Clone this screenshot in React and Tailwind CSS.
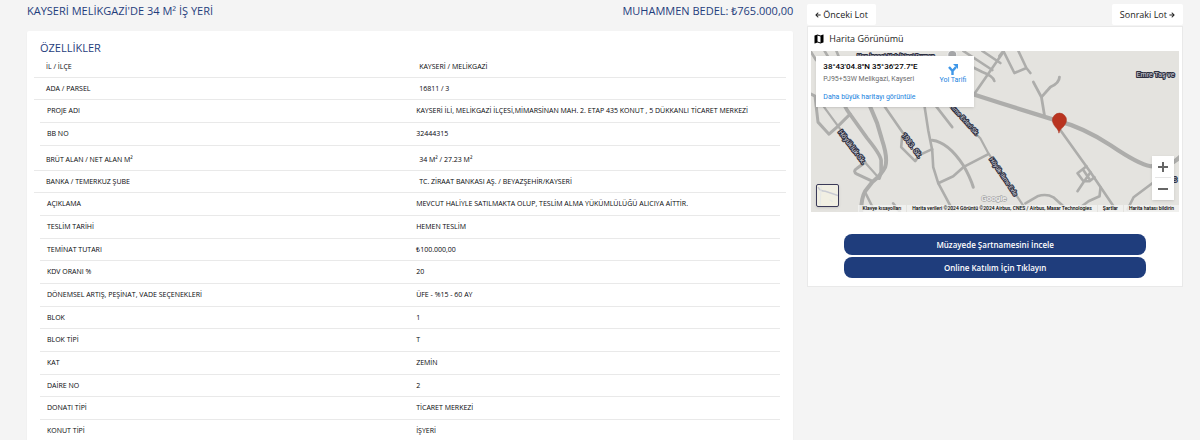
import { useState } from "react";
import { FaArrowLeft, FaArrowRight } from "react-icons/fa";
import { MdMap } from "react-icons/md";

const groups = [
  {
    wide: true,
    rows: [
      ["İL / İLÇE", "KAYSERİ / MELİKGAZİ"],
      ["ADA / PARSEL", "16811 / 3"],
    ],
  },
  {
    wide: false,
    rows: [
      ["PROJE ADI", "KAYSERİ İLİ, MELİKGAZİ İLÇESİ,MİMARSİNAN MAH. 2. ETAP 435 KONUT , 5 DÜKKANLI TİCARET MERKEZİ"],
      ["BB NO", "32444315"],
    ],
  },
  {
    wide: true,
    rows: [
      ["BRÜT ALAN / NET ALAN M²", "34 M² / 27.23 M²"],
      ["BANKA / TEMERKUZ ŞUBE", "TC. ZİRAAT BANKASI AŞ. / BEYAZŞEHİR/KAYSERİ"],
    ],
  },
  {
    wide: false,
    rows: [
      ["AÇIKLAMA", "MEVCUT HALİYLE SATILMAKTA OLUP, TESLİM ALMA YÜKÜMLÜLÜĞÜ ALICIYA AİTTİR."],
      ["TESLİM TARİHİ", "HEMEN TESLİM"],
      ["TEMİNAT TUTARI", "₺100.000,00"],
      ["KDV ORANI %", "20"],
      ["DÖNEMSEL ARTIŞ, PEŞİNAT, VADE SEÇENEKLERİ", "ÜFE - %15 - 60 AY"],
      ["BLOK", "1"],
      ["BLOK TİPİ", "T"],
      ["KAT", "ZEMİN"],
      ["DAİRE NO", "2"],
      ["DONATI TİPİ", "TİCARET MERKEZİ"],
      ["KONUT TİPİ", "İŞYERİ"],
    ],
  },
];

function FeatureTable({ wide, rows }) {
  return (
    <div className={wide ? "px-[7px] nth-[n+3]:pt-[3px]" : "px-[13px]"}>
      <table className="w-full table-fixed border-separate border-spacing-0 text-left text-[7px] leading-[10px] text-[#05060a]">
        <tbody>
          {rows.map(([name, value]) => (
            <tr key={name} className={wide ? "h-[22px]" : "h-[23px] nth-[3n]:h-[22px]"}>
              <th
                scope="row"
                className={`w-1/2 border-b border-[#e9e9e9] p-0 font-medium ${wide ? "pl-3" : "pl-[7px]"}`}
              >
                {name}
              </th>
              <td className={`border-b border-[#e9e9e9] p-0 font-medium ${wide ? "pl-[9px]" : "pl-[6px]"}`}>
                {value}
              </td>
            </tr>
          ))}
        </tbody>
      </table>
    </div>
  );
}

function MapDrawing({ zoom }) {
  return (
    <svg
      viewBox="811 51 367 161"
      preserveAspectRatio="xMidYMid slice"
      className="block h-auto w-full bg-[#e4e3df]"
      role="img"
      aria-label="Harita"
    >
      <g transform={`translate(1058 130) scale(${zoom}) translate(-1058 -130)`}>
        <g fill="none" stroke="#adadab" strokeWidth="2.6" strokeLinecap="round" strokeLinejoin="round">
          <path d="M811 94L815 96L818 122L829 134L838 126L850 114" strokeWidth="3" />
          <path d="M811 52L816 60M824 50L830 60M836 50L840 60" />
          <path d="M819 100L838 126L863 160L879 178" strokeWidth="2.2" />
          <path d="M840 97L847 110L867 138Q880 154 881 160L881 172L879 178" strokeWidth="3.6" />
          <path d="M866 97L877 123L882 140Q888 158 885 167Q881 175 872 182L865 191Q861 198 861 212" strokeWidth="4" />
          <path d="M872 181L857 174Q852 171 857 168L865 162" strokeWidth="3" />
          <path d="M865 192L874 210M893 203L900 212" />
          <path d="M880 100L903 133M902 136L901 147L915 161L919 155L932 149" />
          <path d="M924 104L928 130L932 150L933 167L938 183L952 209" />
          <path d="M932 140Q948 142 963 165Q970 177 973 187" strokeWidth="3" />
          <path d="M938 183L953 176L963 167L988 154" />
          <path d="M935 105L952 127" />
          <path d="M950 107L980 138L988 153L1024 207" strokeWidth="2.2" />
          <path d="M1003 52L974 94M963 51L992 70M982 51L1000 63M972 67L982 72Q993 76 994 81" />
          <path d="M999 56L1003 51L1014 73L1026 68L1018 51M1026 68L1030 73" />
          <path d="M1033 82L1041 97L1044 115M1041 97L1050 87Q1059 83 1059 77" strokeWidth="2.8" />
          <path d="M972 94L1000 103L1058 121Q1082 127 1110 145Q1138 164 1150 166Q1168 168 1179 157" strokeWidth="4.2" />
          <path d="M1060 130L1090 172L1115 209" />
          <path d="M1086 166L1077 173L1083 181L1089 181L1094 177M1083 170L1089 179M1090 172L1083 182L1077 191" />
          <path d="M1100 187L1099 196L1088 201L1080 207M1025 203L1037 196Q1046 193 1053 197L1064 207" />
          <path d="M1127 209L1133 197L1153 182" />
        </g>
        <circle cx="952" cy="55" r="4.5" fill="#a5a6a8" stroke="#f2f2f2" />
        <g
          fill="#b9bac1"
          stroke="#2d2f3f"
          strokeWidth="2"
          strokeLinejoin="round"
          fontSize="7"
          fontWeight="500"
          className="font-['Roboto',sans-serif]"
          style={{ paintOrder: "stroke" }}
        >
          <text x="857" y="58" fontSize="6">Han İnşaat Halı İkinci Duman</text>
          <text x="1136" y="77">Emre Taş ve</text>
          <text transform="translate(838 132) rotate(53)">Höyüklük Sk.</text>
          <text transform="translate(901 135) rotate(53)">1983. Sk.</text>
          <text transform="translate(951 108) rotate(48)" fontSize="6">lıme Evleri Sk.</text>
          <text transform="translate(989 159) rotate(56)" fontSize="6">Höyük-Ilıme Evle</text>
          <text transform="translate(1172 182)">S</text>
        </g>
      </g>
      <path
        d="M1058.500 133C1058 128 1052 126 1052 120A7 7 0 0 1 1066 120C1066 126 1059.500 128 1058.500 133Z"
        fill="#b93420"
        stroke="#a52c18"
        strokeWidth="0.5"
      />
      <text
        x="981"
        y="201"
        fontSize="8"
        fill="#fff"
        stroke="#a9a9a9"
        strokeWidth="1.4"
        className="font-['Roboto',sans-serif]"
        style={{ paintOrder: "stroke" }}
      >
        Google
      </text>
    </svg>
  );
}

function MapView() {
  const [zoom, setZoom] = useState(1);

  return (
    <div className="relative overflow-hidden font-['Roboto',sans-serif]">
      <MapDrawing zoom={zoom} />

      {/* place card */}
      <div className="absolute top-[5px] left-[5px] flex h-[51px] w-[158px] justify-between bg-white px-[7px] py-[5px] shadow">
        <div className="whitespace-nowrap">
          <p className="text-[8px] leading-[12px] font-medium text-black">38°43'04.8"N 35°36'27.7"E</p>
          <p className="text-[7px] leading-[12px] text-[#6b6b6b]">PJ95+53W Melikgazi, Kayseri</p>
          <a href="#harita" className="mt-[7px] block text-[7px] leading-[10px] text-[#1a83e0]">
            Daha büyük haritayı görüntüle
          </a>
        </div>
        <a href="#yol-tarifi" className="flex flex-col items-center pt-[2px] pr-px text-[7px] leading-[10px] text-[#1a83e0]">
          <svg viewBox="0 0 12 12" className="size-[12px]" fill="none" stroke="#3f97e8" strokeWidth="2.4">
            <path d="M5.500 12V8L9 4M5.500 8L2 4" />
            <path d="M6 1H11V6Z" fill="#3f97e8" stroke="none" />
          </svg>
          <span>Yol Tarifi</span>
        </a>
      </div>

      {/* map type switch */}
      <button
        type="button"
        aria-label="Harita türü"
        className="absolute bottom-[5px] left-[5px] size-[23px] overflow-hidden rounded-xs border border-[#3b3a58] bg-[#f1efe3] shadow"
      >
        <svg viewBox="0 0 20 20" className="size-full" fill="none" stroke="#c9cbd3">
          <path d="M1 2Q3 6 8 6L20 10" strokeWidth="1.5" />
          <path d="M4 0L3 20M12 14L15 16" stroke="#e6e8e6" />
        </svg>
      </button>

      <div className="absolute right-[5px] bottom-[12px] flex w-[22px] flex-col bg-white px-[3px] shadow">
        <button
          type="button"
          aria-label="Yakınlaştır"
          onClick={() => setZoom(Math.min(zoom * 1.25, 4))}
          className="flex h-[22px] items-center justify-center border-b border-[#e6e6e6]"
        >
          <svg viewBox="0 0 10 10" className="size-[10px]" stroke="#666" strokeWidth="2">
            <path d="M0 5H10M5 0V10" />
          </svg>
        </button>
        <button
          type="button"
          aria-label="Uzaklaştır"
          onClick={() => setZoom(Math.max(zoom / 1.25, 1))}
          className="flex h-[22px] items-center justify-center"
        >
          <svg viewBox="0 0 10 10" className="size-[10px]" stroke="#666" strokeWidth="2">
            <path d="M0 5H10" />
          </svg>
        </button>
      </div>

      <div className="absolute right-0 bottom-0 flex gap-px text-[5px] leading-[7px] font-medium whitespace-nowrap text-black">
        <button type="button" className="bg-[#f3f3f1]/80 px-[5px]">Klavye kısayolları</button>
        <span className="bg-[#f3f3f1]/80 px-[5px]">
          Harita verileri ©2024 Görüntü ©2024 Airbus, CNES / Airbus, Maxar Technologies
        </span>
        <a href="#sartlar" className="bg-[#f3f3f1]/80 px-[5px]">Şartlar</a>
        <a href="#bildir" className="bg-[#f3f3f1]/80 px-[5px]">Harita hatası bildirin</a>
      </div>
    </div>
  );
}

export default function App() {
  return (
    <div className="grid min-h-screen grid-cols-[204fr_100fr] gap-[14px] bg-[#f4f4f4] pr-[17px] pl-[27px] font-['Open_Sans',sans-serif]">
      <main>
        <div className="flex h-[31px] justify-between pt-[3px] text-[11px] leading-[16px] text-[#1f3d7c]">
          <h1>KAYSERİ MELİKGAZİ'DE 34 M² İŞ YERİ</h1>
          <p>MUHAMMEN BEDEL: ₺765.000,00</p>
        </div>
        <section className="min-h-[calc(100vh-31px)] rounded-t-xs bg-white pt-[9px] shadow-xs">
          <h2 className="px-[13px] text-[11px] leading-[16px] text-[#1f3d7c]">ÖZELLİKLER</h2>
          {groups.map((group, i) => (
            <FeatureTable key={i} wide={group.wide} rows={group.rows} />
          ))}
        </section>
      </main>

      <aside>
        <nav className="flex h-[26px] items-start justify-between pt-1 text-[9px] leading-[12px] text-[#222]">
          <a href="#onceki" className="flex h-[21px] items-center gap-[2px] rounded-xs bg-white px-[8px]">
            <FaArrowLeft className="size-[6px]" />
            Önceki Lot
          </a>
          <a href="#sonraki" className="flex h-[21px] items-center gap-[2px] rounded-xs bg-white px-[8px]">
            Sonraki Lot
            <FaArrowRight className="size-[6px]" />
          </a>
        </nav>
        <section className="border border-[#e9e9e9] bg-white px-[3px] pb-2">
          <h2 className="flex h-6 items-center gap-[4px] px-[2px] text-[9px] leading-[12px] text-[#222]">
            <MdMap className="size-[12px] text-black" />
            Harita Görünümü
          </h2>
          <MapView />
          <div className="mx-auto mt-[22px] flex w-[82%] flex-col gap-[2px] text-[8px] leading-[12px] font-semibold text-white">
            <button type="button" className="h-[21px] rounded-lg bg-[#1f3d7c]">Müzayede Şartnamesini İncele</button>
            <button type="button" className="h-[21px] rounded-lg bg-[#1f3d7c]">Online Katılım İçin Tıklayın</button>
          </div>
        </section>
      </aside>
    </div>
  );
}
